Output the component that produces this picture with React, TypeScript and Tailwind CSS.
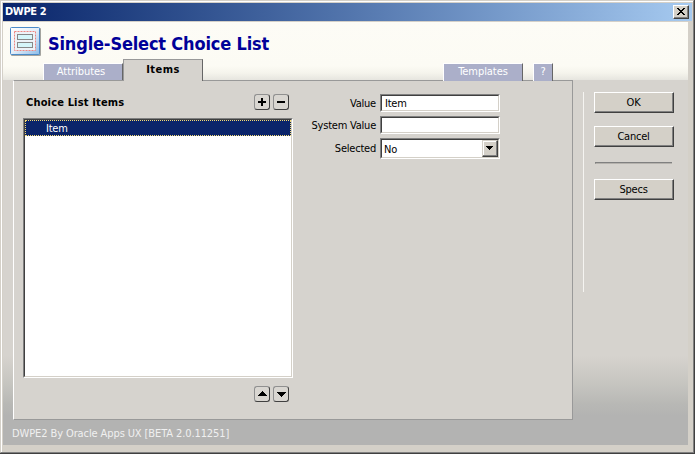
import React from "react";

const sunken =
  "border border-t-[#808080] border-l-[#808080] border-r-white border-b-white";
const sunkenInner =
  "border border-t-[#404040] border-l-[#404040] border-r-[#d4d0c8] border-b-[#d4d0c8] bg-white";

function PushButton({ label, className = "" }: { label: string; className?: string }) {
  return (
    <button
      className={`block h-[21px] w-20 border border-t-white border-l-white border-r-[#404040] border-b-[#404040] bg-[#d4d0c8] ${className}`}
    >
      <span className="block h-[19px] border-r border-b border-[#808080] text-center leading-[19px]">
        {label}
      </span>
    </button>
  );
}

function ToolButton({ children }: { children: React.ReactNode }) {
  return (
    <button className="flex size-4 items-center justify-center rounded-[3px] border border-t-[#909090] border-l-[#909090] border-r-[#404040] border-b-[#404040] bg-[#d9d6d1]">
      <svg width="14" height="14" viewBox="0 0 14 14" shapeRendering="crispEdges">
        {children}
      </svg>
    </button>
  );
}

function Tab({ label, className = "" }: { label: string; className?: string }) {
  return (
    <div
      className={`flex justify-center border-t border-r border-l border-t-white border-l-white border-r-[#666] bg-[#abafc9] leading-[16px] tracking-[-0.05px] text-white ${className}`}
    >
      {label}
    </div>
  );
}

function Field({ label, value, className = "" }: { label: string; value: string; className?: string }) {
  return (
    <div className={`flex h-[18px] ${className}`}>
      <span className="w-[76px] text-right leading-[20px] whitespace-nowrap">{label}</span>
      <div className={`ml-1 w-[120px] ${sunken}`}>
        <div className={`h-4 pl-[3px] leading-[15px] ${sunkenInner}`}>{value}</div>
      </div>
    </div>
  );
}

export default function App() {
  return (
    <div className="h-[454px] w-[695px] overflow-hidden border-r border-b border-[#404040] bg-[#d4d0c8] font-['DejaVu_Sans_Condensed','DejaVu_Sans',sans-serif] text-[11px] tracking-[-0.22px] text-black">
      <div className="h-[453px] w-[694px] border border-t-[#d4d0c8] border-l-[#d4d0c8] border-r-[#808080] border-b-[#808080]">
        <div className="h-[451px] border-t border-l border-white pt-px pl-px">
          <div className="flex h-[18px] w-[689px] items-center justify-between bg-linear-to-r from-[#0a246a] to-[#a6caf0] pr-[3px] pl-0.5">
            <span className="pt-px font-bold tracking-[-0.35px] text-white">DWPE 2</span>
            <button className="h-3.5 w-4 border border-t-white border-l-white border-r-[#404040] border-b-[#404040] bg-[#d4d0c8]">
              <svg width="14" height="12" viewBox="0 0 14 12" shapeRendering="crispEdges">
                <path d="M13.5 0V11.5H0" fill="none" stroke="#808080" />
                <path d="M3 2h2v1h1v1h2V3h1V2h2v1h-1v1H9v1H8v1h1v1h1v1h1v1H9V8H8V7H6v1H5v1H3V8h1V7h1V6h1V5H5V4H4V3H3z" fill="#000" />
              </svg>
            </button>
          </div>

          <div className="mt-px h-[423px] w-[685px] bg-[linear-gradient(#d6d3ce_0,#d6d3ce_334px,#c7c6c1_360px,#b8b8b5_382px,#b3b3b2_394px)]">
            <header className="flex h-[58px] flex-col justify-between bg-[linear-gradient(#fdfcf6_0,#fcfbf4_44px,#f5f4ec_51px,#e6e5df_58px)]">
              <div className="flex h-[37px] pt-[5px] pl-[7px]">
                <svg className="shrink-0" width="31" height="29" viewBox="0 0 31 29">
                  <defs>
                    <linearGradient id="tile" x1="0" y1="0" x2="1" y2="1">
                      <stop offset="0" stopColor="#ffffff" />
                      <stop offset=".5" stopColor="#e4eef8" />
                      <stop offset="1" stopColor="#8bbbe8" />
                    </linearGradient>
                  </defs>
                  <rect x="1" y="1" width="30" height="28" rx="1" fill="#a4a49f" />
                  <rect x=".5" y=".5" width="29" height="27" rx="1" fill="url(#tile)" stroke="#4b8bc9" />
                  <rect x="4.5" y="4.5" width="21" height="19" fill="#edf3f8" stroke="#ee8580" strokeDasharray="2 1" />
                  <rect x="7.5" y="7.5" width="15" height="5" fill="#d5f6fa" stroke="#888" />
                  <rect x="7.5" y="15.5" width="15" height="5" fill="#d5f6fa" stroke="#888" />
                </svg>
                <h1 className="mt-[5px] ml-[7px] text-[18px] leading-[24px] font-bold tracking-[-0.17px] whitespace-nowrap text-[#000099]">
                  Single-Select Choice List
                </h1>
              </div>
              <div className="z-10 -mb-px flex h-[22px] items-end pl-10">
                <Tab label="Attributes" className="mb-px h-[17px] w-20 pr-1" />
                <div className="flex h-[22px] w-20 justify-center border-t border-r border-l border-t-[#999] border-l-[#999] border-r-[#666] bg-[#d6d3ce] leading-[19px] font-bold tracking-[0.45px]">
                  Items
                </div>
                <Tab label="Templates" className="ml-[240px] h-[18px] w-20" />
                <Tab label="?" className="ml-[10px] h-[18px] w-5" />
              </div>
            </header>

            <div className="flex">
              <main className="ml-[10px] flex h-[340px] w-[560px] border border-t-[#999] border-l-white border-r-[#999] border-b-[#999] bg-[#d6d3ce]">
                <section className="ml-[9px] w-[270px] pt-[13px]">
                  <div className="flex h-6 items-start gap-[3px] pr-1">
                    <h2 className="mr-auto pl-[3px] leading-[17px] font-bold tracking-[0.16px]">Choice List Items</h2>
                    <ToolButton>
                      <path d="M6 3h2v3h3v2H8v3H6V8H3V6h3z" fill="#000" />
                    </ToolButton>
                    <ToolButton>
                      <path d="M3 6h8v2H3z" fill="#000" />
                    </ToolButton>
                  </div>
                  <div className={`h-[260px] w-[270px] ${sunken}`}>
                    <div className={`h-[258px] ${sunkenInner}`}>
                      <div className="h-4 border border-dotted border-[#f5db73] bg-[#0a246a] pl-5 leading-[15px] text-white">
                        Item
                      </div>
                    </div>
                  </div>
                  <div className="mt-2 flex justify-end gap-[3px] pr-1">
                    <ToolButton>
                      <path d="M7 4h1v1h1v1h1v1h1v1h1v1H3V8h1V7h1V6h1V5h1z" fill="#000" />
                    </ToolButton>
                    <ToolButton>
                      <path d="M3 5h9v1h-1v1h-1v1H9v1H8v1H7V9H6V8H5V7H4V6H3z" fill="#000" />
                    </ToolButton>
                  </div>
                </section>

                <section className="ml-[7px] pt-[13px]">
                  <Field label="Value" value="Item" />
                  <Field label="System Value" value="" className="mt-1" />
                  <div className="mt-1 flex h-[21px]">
                    <span className="w-[76px] text-right leading-[21px]">Selected</span>
                    <div className={`ml-1 w-[120px] ${sunken}`}>
                      <div className={`flex h-[19px] justify-between pl-0.5 leading-[19px] ${sunkenInner}`}>
                        No
                        <div className="h-[17px] w-4 border border-t-[#d4d0c8] border-l-[#d4d0c8] border-r-[#404040] border-b-[#404040] bg-[#d4d0c8]">
                          <svg width="14" height="15" viewBox="0 0 14 15" shapeRendering="crispEdges">
                            <path d="M.5 14V.5H13" fill="none" stroke="#fff" />
                            <path d="M13.5 0V14.5H0" fill="none" stroke="#808080" />
                            <path d="M3 5h7v1H9v1H8v1H7v1H6V8H5V7H4V6H3z" fill="#000" />
                          </svg>
                        </div>
                      </div>
                    </div>
                  </div>
                </section>
              </main>

              <aside className="mt-3 ml-[10px] h-[200px] border-l border-[#f5f4f1] pl-[10px]">
                <PushButton label="OK" />
                <PushButton label="Cancel" className="mt-[13px]" />
                <div className="mt-[15px] ml-px h-0.5 w-[77px] border-t border-b border-l border-t-[#808080] border-b-[#b5b2ad] border-l-[#808080]" />
                <PushButton label="Specs" className="mt-[15px]" />
              </aside>
            </div>
            <footer className="pt-1.5 pl-[9px] leading-[15px] tracking-[-0.1px] text-[#f0f0f0]">
              DWPE2 By Oracle Apps UX [BETA 2.0.11251]
            </footer>
          </div>
        </div>
      </div>
    </div>
  );
}
